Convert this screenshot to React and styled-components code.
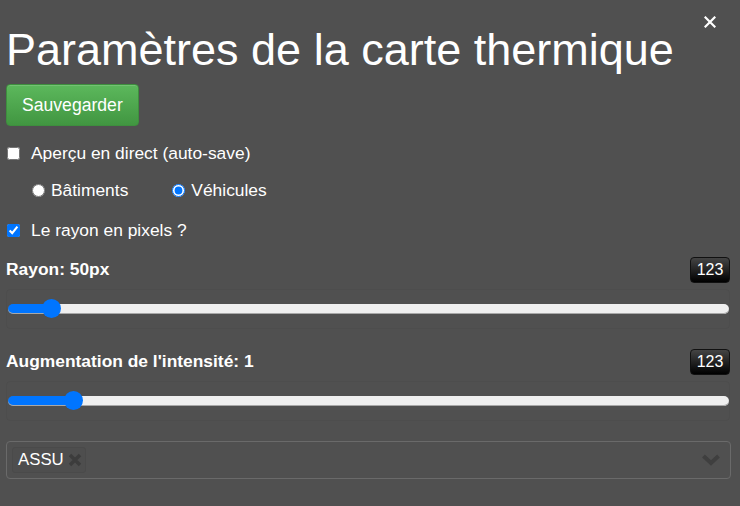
import React, { useState } from "react";
import styled, { createGlobalStyle } from "styled-components";

const Global = createGlobalStyle`
  html, body { margin: 0; padding: 0; background: #505050; }
  body { font-family: "Liberation Sans", Arial, sans-serif; color: #fff; }
`;

const Panel = styled.div`
  position: relative;
  width: 740px;
  height: 506px;
  box-sizing: border-box;
  padding: 26px 10px 0 6px;
  background: #505050;
  overflow: hidden;
`;

const Title = styled.h1`
  margin: 0;
  font-size: 45px;
  line-height: 48px;
  font-weight: 400;
  color: #fff;
  white-space: nowrap;
`;

const Close = styled.button`
  position: absolute;
  top: 15px;
  right: 23px;
  width: 14px;
  height: 14px;
  padding: 0;
  border: 0;
  background: transparent;
  cursor: pointer;
  display: flex;
  align-items: center;
  justify-content: center;
`;

const SaveButton = styled.button`
  margin-top: 10px;
  height: 42px;
  padding: 0 15px;
  border: 1px solid #3e8f3e;
  border-radius: 4px;
  background: linear-gradient(to bottom, #5cb85c 0%, #419641 100%);
  color: #fff;
  font-family: "Liberation Sans", Arial, sans-serif;
  font-size: 17.6px;
  box-shadow: inset 0 1px 0 rgba(255, 255, 255, 0.15);
  cursor: pointer;
`;

const Row = styled.label`
  display: flex;
  align-items: center;
  height: 20px;
  margin-top: ${(p) => p.$mt}px;
  font-size: 17.4px;
  color: #fff;
`;

const RadioGroup = styled.div`
  display: flex;
  align-items: center;
  height: 20px;
  margin-top: ${(p) => p.$mt}px;
  padding-left: 26px;
`;

const RadioLabel = styled.label`
  display: flex;
  align-items: center;
  font-size: 17.4px;
  margin-right: 44px;
`;

const Check = styled.input`
  width: 13px;
  height: 13px;
  margin: 0 11px 0 1px;
`;

const Radio = styled.input`
  width: 13px;
  height: 13px;
  margin: 0 6px 0 0;
`;

const LabelRow = styled.div`
  display: flex;
  align-items: center;
  justify-content: space-between;
  height: 26px;
  margin-top: ${(p) => p.$mt}px;
`;

const FieldLabel = styled.span`
  font-weight: 700;
  font-size: 17.4px;
  color: #fff;
`;

const Badge = styled.span`
  display: flex;
  align-items: center;
  justify-content: center;
  width: 40px;
  height: 26px;
  box-sizing: border-box;
  border: 1px solid #111;
  border-radius: 4px;
  background: linear-gradient(to bottom, #444 0%, #000 100%);
  color: #fff;
  font-size: 16px;
`;

const SliderBox = styled.div`
  display: flex;
  align-items: center;
  height: 40px;
  margin-top: 6px;
  box-sizing: border-box;
  border: 1px solid rgba(0, 0, 0, 0.035);
  border-radius: 4px;
`;

const Range = styled.input`
  -webkit-appearance: none;
  appearance: none;
  width: 100%;
  height: 10px;
  margin: 0 0 0 1px;
  border-radius: 5px;
  box-shadow: inset 0 -1px 0 #a8a8a8;
  outline: none;
  &::-webkit-slider-thumb {
    -webkit-appearance: none;
    appearance: none;
    width: 19px;
    height: 19px;
    border-radius: 50%;
    background: #0075ff;
    border: 0;
  }
`;

const Select = styled.div`
  display: flex;
  align-items: center;
  justify-content: space-between;
  height: 38px;
  margin-top: 20px;
  margin-right: -1px;
  box-sizing: border-box;
  padding: 0 9px 0 5px;
  border: 1px solid #6a6a6a;
  border-radius: 4px;
`;

const Tag = styled.span`
  display: flex;
  align-items: center;
  height: 26px;
  box-sizing: border-box;
  padding: 0 1px 0 5px;
  border: 1px solid #4a4a4a;
  border-radius: 3px;
  background: #4e4e4e;
  font-size: 16.8px;
  color: #fff;
`;

const TagRemove = styled.span`
  display: flex;
  align-items: center;
  margin-left: 2px;
`;

function Slider({ min, max, value }) {
  const f = (value - min) / (max - min);
  const pct = `calc(9.5px + ${f} * (100% - 19px))`;
  return (
    <Range
      type="range"
      min={min}
      max={max}
      step="any"
      defaultValue={value}
      style={{
        background: `linear-gradient(to right, #0075ff 0, #0075ff ${pct}, #efefef ${pct}, #efefef 100%)`,
      }}
    />
  );
}

export default function App() {
  const [mode, setMode] = useState("veh");
  return (
    <>
      <Global />
      <Panel>
        <Close aria-label="Fermer">
          <svg width="12" height="12" viewBox="0 0 12 12">
            <path d="M1.5 1.5 L10.5 10.5 M10.5 1.5 L1.5 10.5" stroke="#fff" strokeWidth="2.2" strokeLinecap="square" />
          </svg>
        </Close>
        <Title>Paramètres de la carte thermique</Title>
        <SaveButton>Sauvegarder</SaveButton>
        <Row $mt={17}>
          <Check type="checkbox" />
          Aperçu en direct (auto-save)
        </Row>
        <RadioGroup $mt={17.5}>
          <RadioLabel>
            <Radio type="radio" name="m" checked={mode === "bat"} onChange={() => setMode("bat")} />
            Bâtiments
          </RadioLabel>
          <RadioLabel>
            <Radio type="radio" name="m" checked={mode === "veh"} onChange={() => setMode("veh")} />
            Véhicules
          </RadioLabel>
        </RadioGroup>
        <Row $mt={19.5}>
          <Check type="checkbox" defaultChecked />
          Le rayon en pixels ?
        </Row>
        <LabelRow $mt={16.5}>
          <FieldLabel>Rayon: 50px</FieldLabel>
          <Badge>123</Badge>
        </LabelRow>
        <SliderBox>
          <Slider min={1} max={1000} value={50} />
        </SliderBox>
        <LabelRow $mt={20}>
          <FieldLabel>Augmentation de l'intensité: 1</FieldLabel>
          <Badge>123</Badge>
        </LabelRow>
        <SliderBox>
          <Slider min={0} max={12.5} value={1} />
        </SliderBox>
        <Select>
          <Tag>
            ASSU
            <TagRemove>
              <svg width="18" height="18" viewBox="0 0 18 18">
                <path d="M4 4 L14 14 M14 4 L4 14" stroke="#3c3c3c" strokeWidth="3.4" />
              </svg>
            </TagRemove>
          </Tag>
          <svg width="20" height="14" viewBox="0 0 20 14">
            <path d="M2.5 3 L10 10 L17.5 3" stroke="#3f3f3f" strokeWidth="4" fill="none" />
          </svg>
        </Select>
      </Panel>
    </>
  );
}
